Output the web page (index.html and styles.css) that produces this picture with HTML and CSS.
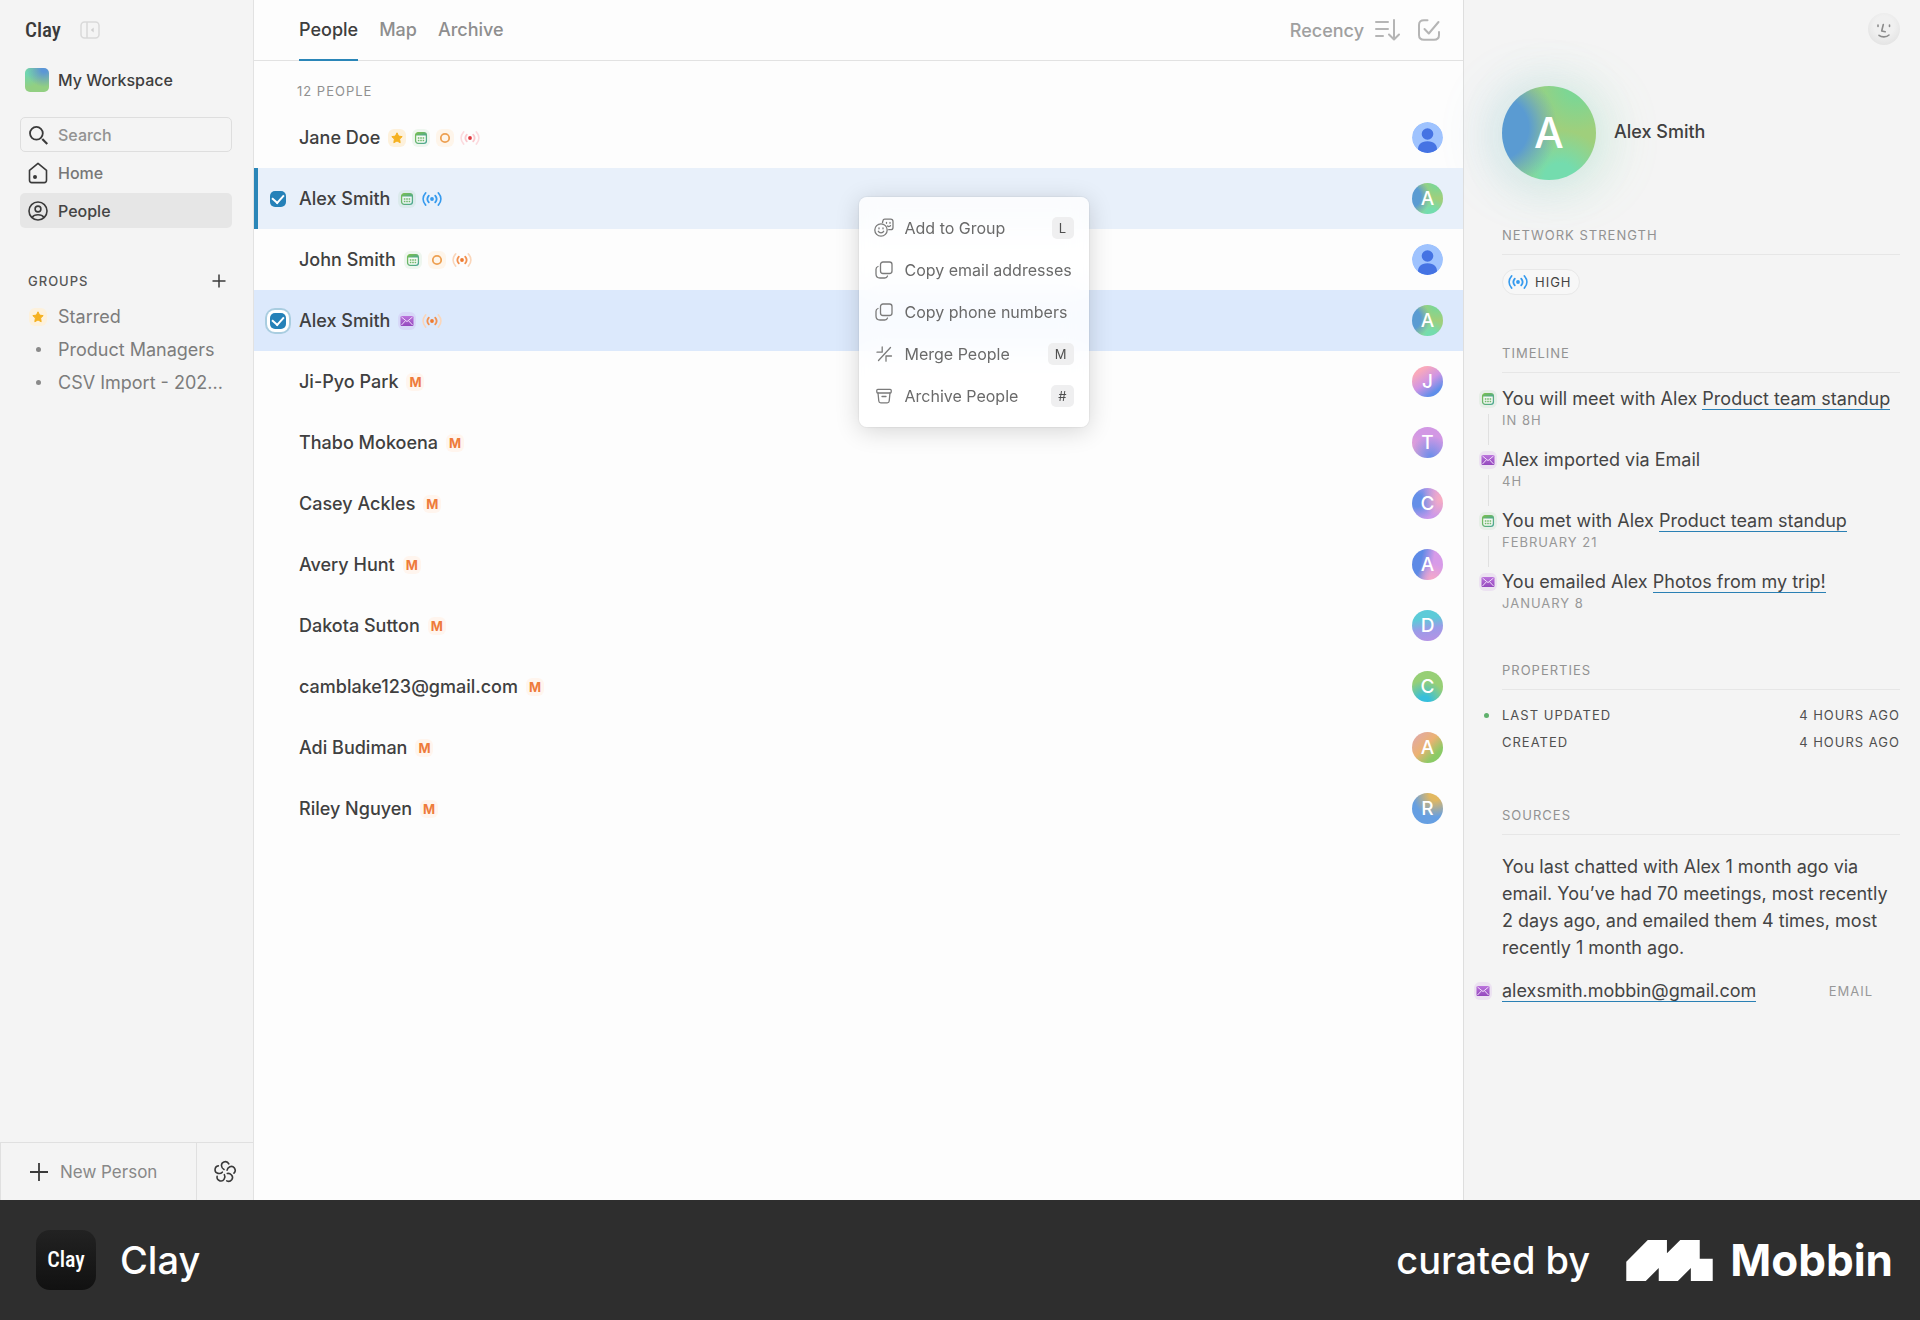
FILE: index.html
```html
<!DOCTYPE html>
<html lang="en">
<head>
  <meta charset="utf-8">
  <title>Clay</title>
  <link rel="stylesheet" href="styles.css">
</head>
<body>
  <!-- icon sprite -->
  <svg class="sprite" aria-hidden="true">
    <defs>
      <linearGradient id="greenFade" x1="0" y1="0" x2="1" y2="1">
        <stop offset="0" stop-color="#7cc04e"/>
        <stop offset="1" stop-color="#4aa695"/>
      </linearGradient>
      <linearGradient id="purpleFade" x1="0" y1="0" x2="0" y2="1">
        <stop offset="0" stop-color="#bb74dc"/>
        <stop offset="1" stop-color="#9448bd"/>
      </linearGradient>
    </defs>
    <symbol id="star" viewBox="0 0 18 18">
      <path d="M9 3.8l1.6 3.3 3.6.5-2.6 2.5.6 3.6L9 12l-3.2 1.7.6-3.6-2.6-2.5 3.6-.5z" fill="#f5b120" stroke="#f5b120" stroke-linejoin="round"/>
    </symbol>
    <symbol id="calendar" viewBox="0 0 18 18">
      <rect x="3.6" y="3.6" width="10.8" height="10.8" rx="2.6" fill="#fff" fill-opacity=".5" stroke="url(#greenFade)" stroke-width="1.3"/>
      <path d="M3.6 6.6c0-2.200 1-3 2.600-3h5.600c1.600 0 2.600.8 2.600 3z" fill="url(#greenFade)"/>
      <path d="M5.800 9h1.600M8.200 9h1.600M10.600 9h1.600M5.800 11.500h1.600M8.200 11.500h1.600M10.600 11.500h1.600" stroke="#6fb86a" stroke-width="1.300"/>
    </symbol>
    <symbol id="ring" viewBox="0 0 18 18">
      <circle cx="9" cy="9" r="4.200" fill="none" stroke="#eda052" stroke-width="1.800"/>
    </symbol>
    <symbol id="mail" viewBox="0 0 18 18">
      <rect x="2.500" y="4" width="13" height="10" rx="1.200" fill="url(#purpleFade)"/>
      <path d="M3.500 5l5.500 4.600L14.500 5M3.500 13l4-4.300M14.500 13l-4-4.300" fill="none" stroke="#f0dcfa" stroke-width="1"/>
    </symbol>
    <symbol id="signal" viewBox="0 0 20 18">
      <circle class="dot" cx="10" cy="9" r="1.900"/>
      <path class="inner" d="M6.800 5.600c-1.700 2-1.700 4.800 0 6.800M13.200 5.600c1.700 2 1.700 4.800 0 6.800"/>
      <path class="outer" d="M3.600 3c-3.200 3.600-3.200 8.400 0 12M16.400 3c3.200 3.600 3.200 8.400 0 12"/>
    </symbol>
    <symbol id="person" viewBox="0 0 31 31">
      <circle cx="15.500" cy="15.500" r="15.500" fill="#9fc3fe"/>
      <circle cx="15.500" cy="12" r="5.800" fill="#4573e3"/>
      <path d="M6 27.500c0-4.500 2.500-8.200 9.500-8.200s9.500 3.700 9.500 8.200c-2.700 2.200-6 3.500-9.500 3.500s-6.800-1.300-9.500-3.500z" fill="#4573e3"/>
    </symbol>
    <symbol id="copy" viewBox="0 0 20 20">
      <rect x="6.500" y="2" width="11.500" height="11.500" rx="2.500"/>
      <path d="M4 6.500c-1.400.4-2 1.300-2 2.800V14c0 2.700 1.300 4 4 4h4.700c1.500 0 2.400-.6 2.800-2"/>
    </symbol>
  </svg>

  <div class="app">
    <aside class="sidebar">
      <div class="brand">
        <span class="wordmark">Clay</span>
        <button class="icon-button" aria-label="Collapse sidebar">
          <svg width="20" height="18" viewBox="0 0 20 18" fill="none" stroke="#d9d9d9" stroke-width="1.500">
            <rect x="1" y="1" width="18" height="16" rx="3.500"/>
            <path d="M7 1v16"/>
            <path d="M13.700 6.500v5L10.800 9z" fill="#d0d0d0" stroke="none"/>
          </svg>
        </button>
      </div>
      <a class="workspace" href="#"><span class="swatch"></span>My Workspace</a>

      <nav class="nav">
        <label class="nav-item search">
          <svg width="20" height="20" viewBox="0 0 20 20" fill="none" stroke="#3a3a3a" stroke-width="1.800"><circle cx="8.400" cy="8.300" r="6.400"/><path d="M14.300 14l5 5" stroke-width="2.200"/></svg>
          <input type="text" placeholder="Search" aria-label="Search">
        </label>
        <a class="nav-item" href="#">
          <svg width="20" height="22" viewBox="0 0 20 22" fill="none" stroke="#3a3a3a" stroke-width="1.600" stroke-linejoin="round"><path d="M1.500 8.300L10 1.300l8.500 7v10c0 1.600-.7 2.300-2.300 2.300H3.800c-1.600 0-2.300-.7-2.300-2.300z"/><circle cx="7" cy="15" r="2" fill="#3a3a3a" stroke="none"/></svg>
          Home
        </a>
        <a class="nav-item active" href="#">
          <svg width="20" height="20" viewBox="0 0 20 20" fill="none" stroke="#3a3a3a" stroke-width="1.600"><circle cx="10" cy="10" r="9"/><circle cx="10" cy="8" r="2.900"/><path d="M4 16.500c1.200-1.900 3.300-2.800 6-2.800s4.800.9 6 2.800"/></svg>
          People
        </a>
      </nav>

      <div class="groups-head">
        <h2>GROUPS</h2>
        <button class="icon-button" aria-label="Add group">
          <svg width="14" height="14" viewBox="0 0 14 14" stroke="#3a3a3a" stroke-width="1.500"><path d="M7 .5v13M.5 7h13"/></svg>
        </button>
      </div>
      <ul class="groups">
        <li><span class="group-icon"><svg class="tag tag-star" width="18" height="18"><use href="#star"/></svg></span><a href="#">Starred</a></li>
        <li><span class="group-icon"><span class="bullet"></span></span><a href="#">Product Managers</a></li>
        <li><span class="group-icon"><span class="bullet"></span></span><a href="#">CSV Import - 202...</a></li>
      </ul>

      <div class="sidebar-foot">
        <button class="new-person">
          <svg width="18" height="18" viewBox="0 0 18 18" stroke="#3a3a3a" stroke-width="1.800"><path d="M9 0v18M0 9h18"/></svg>
          New Person
        </button>
        <button class="nexus" aria-label="Nexus">
          <svg width="24" height="24" viewBox="0 0 24 24" fill="none" stroke="#3a3a3a" stroke-width="1.600" stroke-linecap="round">
            <path id="petal" d="M11 9.500C8.200 8.300 7.200 3.200 10.800 1.900c2.200-.7 4.200.2 5 1.900"/>
            <use href="#petal" transform="rotate(72 12 12)"/>
            <use href="#petal" transform="rotate(144 12 12)"/>
            <use href="#petal" transform="rotate(216 12 12)"/>
            <use href="#petal" transform="rotate(288 12 12)"/>
          </svg>
        </button>
      </div>
    </aside>

    <main class="main">
      <header class="topbar">
        <nav class="tabs">
          <a class="tab active" href="#">People</a>
          <a class="tab" href="#">Map</a>
          <a class="tab" href="#">Archive</a>
        </nav>
        <button class="sort">
          Recency
          <svg width="25" height="22" viewBox="0 0 25 22" fill="none" stroke="#b5b5b5" stroke-width="2" stroke-linecap="round" stroke-linejoin="round"><path d="M1 3h12M1 10h12M1 17h7M19 1v19M14 15.500l5 5 5-5"/></svg>
        </button>
        <button class="icon-button" aria-label="Select all">
          <svg width="22" height="22" viewBox="0 0 22 22" fill="none" stroke="#b5b5b5" stroke-width="2" stroke-linecap="round" stroke-linejoin="round"><path d="M9.500 1.200H6C2.700 1.200 1 2.800 1 6v10c0 3.200 1.700 4.800 5 4.800h10c3.300 0 5-1.600 5-4.800v-3M6.500 10l4.300 4.500L20.500 3"/></svg>
        </button>
      </header>

      <p class="count">12 PEOPLE</p>

      <ul class="people">
        <li class="person">
          <span class="check"></span>
          <span class="name">Jane Doe</span>
          <svg class="tag tag-star" width="18" height="18"><use href="#star"/></svg>
          <svg class="tag tag-green" width="18" height="18"><use href="#calendar"/></svg>
          <svg class="tag tag-orange" width="18" height="18"><use href="#ring"/></svg>
          <svg class="signal weak" width="20" height="18"><use href="#signal"/></svg>
          <svg class="avatar" width="31" height="31"><use href="#person"/></svg>
        </li>
        <li class="person selected">
          <span class="check"><input type="checkbox" id="alex-1" checked></span>
          <label class="name" for="alex-1">Alex Smith</label>
          <svg class="tag tag-green" width="18" height="18"><use href="#calendar"/></svg>
          <svg class="signal strong" width="20" height="18"><use href="#signal"/></svg>
          <span class="avatar g-alex">A</span>
        </li>
        <li class="person">
          <span class="check"></span>
          <span class="name">John Smith</span>
          <svg class="tag tag-green" width="18" height="18"><use href="#calendar"/></svg>
          <svg class="tag tag-orange" width="18" height="18"><use href="#ring"/></svg>
          <svg class="signal medium" width="20" height="18"><use href="#signal"/></svg>
          <svg class="avatar" width="31" height="31"><use href="#person"/></svg>
        </li>
        <li class="person focused">
          <span class="check"><input type="checkbox" id="alex-2" checked></span>
          <label class="name" for="alex-2">Alex Smith</label>
          <svg class="tag tag-purple" width="18" height="18"><use href="#mail"/></svg>
          <svg class="signal medium" width="20" height="18"><use href="#signal"/></svg>
          <span class="avatar g-alex">A</span>
        </li>
        <li class="person">
          <span class="check"></span>
          <span class="name">Ji-Pyo Park</span>
          <span class="tag tag-m">M</span>
          <span class="avatar g-ji">J</span>
        </li>
        <li class="person">
          <span class="check"></span>
          <span class="name">Thabo Mokoena</span>
          <span class="tag tag-m">M</span>
          <span class="avatar g-thabo">T</span>
        </li>
        <li class="person">
          <span class="check"></span>
          <span class="name">Casey Ackles</span>
          <span class="tag tag-m">M</span>
          <span class="avatar g-casey">C</span>
        </li>
        <li class="person">
          <span class="check"></span>
          <span class="name">Avery Hunt</span>
          <span class="tag tag-m">M</span>
          <span class="avatar g-avery">A</span>
        </li>
        <li class="person">
          <span class="check"></span>
          <span class="name">Dakota Sutton</span>
          <span class="tag tag-m">M</span>
          <span class="avatar g-dakota">D</span>
        </li>
        <li class="person">
          <span class="check"></span>
          <span class="name">camblake123@gmail.com</span>
          <span class="tag tag-m">M</span>
          <span class="avatar g-cam">C</span>
        </li>
        <li class="person">
          <span class="check"></span>
          <span class="name">Adi Budiman</span>
          <span class="tag tag-m">M</span>
          <span class="avatar g-adi">A</span>
        </li>
        <li class="person">
          <span class="check"></span>
          <span class="name">Riley Nguyen</span>
          <span class="tag tag-m">M</span>
          <span class="avatar g-riley">R</span>
        </li>
      </ul>

      <!-- context menu -->
      <div class="menu">
        <button class="menu-item">
          <svg width="20" height="20" viewBox="0 0 20 20"><circle cx="7" cy="12" r="6.200"/><path d="M8.500 4.500l.5-2c.2-1 .7-1.400 1.700-1.400h6c1.600 0 2.300.7 2.300 2.300v6c0 1.600-.7 2.300-2.300 2.300h-2M4.300 13.300c.9 2 4.500 2 5.400 0M5 9.800v1M9 9.800v1M12.500 4.300v1M16 4.300v1M13.500 8c1 .8 2.300.6 3-.4"/></svg>
          Add to Group <kbd>L</kbd>
        </button>
        <button class="menu-item">
          <svg width="20" height="20"><use href="#copy"/></svg>
          Copy email addresses
        </button>
        <button class="menu-item">
          <svg width="20" height="20"><use href="#copy"/></svg>
          Copy phone numbers
        </button>
        <button class="menu-item">
          <svg width="20" height="20" viewBox="0 0 20 20"><path d="M4.500 16.500l12-13M3 8.200h5.200V3M17.500 12H12v5.200"/></svg>
          Merge People <kbd>M</kbd>
        </button>
        <button class="menu-item">
          <svg width="20" height="20" viewBox="0 0 20 20"><rect x="2.800" y="3.300" width="14.400" height="3.700" rx="1"/><path d="M4 7l.8 8c.1 1.200.8 1.800 2 1.800h6.400c1.200 0 1.900-.6 2-1.800L16 7M8 10.500h4"/></svg>
          Archive People <kbd>#</kbd>
        </button>
      </div>
    </main>

    <aside class="details">
      <div class="details-top">
        <button class="moon" aria-label="Account">
          <svg width="32" height="32" viewBox="0 0 32 32" fill="none" stroke="#8c8c8c" stroke-width="1.600" stroke-linecap="round" stroke-linejoin="round"><path d="M10 12v1.500M21.500 12v1.500M15.300 11.500l-1.600 6.500 3.500.8M11 22.300c2.500 2.200 7.500 2.200 10-.3"/></svg>
        </button>
      </div>
      <div class="profile">
        <span class="portrait g-alex">A</span>
        <h1>Alex Smith</h1>
      </div>

      <section class="section">
        <h2>NETWORK STRENGTH</h2>
        <span class="pill"><svg class="signal strong" width="20" height="18"><use href="#signal"/></svg>HIGH</span>
      </section>

      <section class="section">
        <h2>TIMELINE</h2>
        <ul class="timeline">
          <li>
            <div class="marker"><svg class="tag tag-green" width="18" height="18"><use href="#calendar"/></svg></div>
            <div><p>You will meet with Alex <a href="#">Product team standup</a></p><small>IN 8H</small></div>
          </li>
          <li>
            <div class="marker"><svg class="tag tag-purple" width="18" height="18"><use href="#mail"/></svg></div>
            <div><p>Alex imported via Email</p><small>4H</small></div>
          </li>
          <li>
            <div class="marker"><svg class="tag tag-green" width="18" height="18"><use href="#calendar"/></svg></div>
            <div><p>You met with Alex <a href="#">Product team standup</a></p><small>FEBRUARY 21</small></div>
          </li>
          <li>
            <div class="marker"><svg class="tag tag-purple" width="18" height="18"><use href="#mail"/></svg></div>
            <div><p>You emailed Alex <a href="#">Photos from my trip!</a></p><small>JANUARY 8</small></div>
          </li>
        </ul>
      </section>

      <section class="section">
        <h2>PROPERTIES</h2>
        <dl class="properties">
          <div class="updated"><dt>LAST UPDATED</dt><dd>4 HOURS AGO</dd></div>
          <div><dt>CREATED</dt><dd>4 HOURS AGO</dd></div>
        </dl>
      </section>

      <section class="section">
        <h2>SOURCES</h2>
        <p class="summary">You last chatted with Alex 1 month ago via email. You’ve had 70 meetings, most recently 2 days ago, and emailed them 4 times, most recently 1 month ago.</p>
        <div class="source">
          <svg class="tag tag-purple" width="18" height="18"><use href="#mail"/></svg>
          <a href="#">alexsmith.mobbin@gmail.com</a>
          <small>EMAIL</small>
        </div>
      </section>
    </aside>
  </div>

  <footer class="banner">
    <span class="app-icon">Clay</span>
    <span class="app-name">Clay</span>
    <span class="curated">curated by</span>
    <svg class="mobbin-mark" width="87" height="41" viewBox="0 0 253 120"><path d="M0 64L63 0h56v39L158 0h57v55h38v65h-64V82l-38 38H95V82l-38 38H0z" fill="#fff"/></svg>
    <span class="mobbin">Mobbin</span>
  </footer>
</body>
</html>
```
FILE: styles.css
```css
* {
  box-sizing: border-box;
}

body {
  margin: 0;
  min-height: 100vh;
  display: flex;
  flex-direction: column;
  font-family: Inter, "Liberation Sans", sans-serif;
  font-size: 18px;
  color: #444;
  background: #fdfdfd;
}

h1, h2, p, ul, dl, dd {
  margin: 0;
  padding: 0;
}

ul {
  list-style: none;
}

a {
  color: inherit;
  text-decoration: none;
}

button {
  font: inherit;
  color: inherit;
  background: none;
  border: 0;
  padding: 0;
}

svg {
  display: block;
  flex: none;
}

.sprite {
  position: absolute;
  width: 0;
  height: 0;
}

.app {
  flex: 1;
  display: grid;
  grid-template-columns: 254px 1fr 457px;
}

/* sidebar */
.sidebar {
  display: flex;
  flex-direction: column;
  background: #f4f4f4;
  border-right: 1px solid #e2e2e2;
}

.brand {
  display: flex;
  align-items: center;
  gap: 15px;
  height: 60px;
  padding: 0 25px;
}

.wordmark {
  width: 40px;
  font-family: "Roboto Condensed", "Open Sans Condensed", Roboto, sans-serif;
  font-size: 21px;
  font-weight: 500;
  color: #3a3a3a;
}

.workspace {
  display: flex;
  align-items: center;
  gap: 9px;
  height: 40px;
  padding: 0 25px;
  font-size: 16px;
  font-weight: 500;
  color: #3e3e3e;
}

.swatch {
  width: 24px;
  height: 24px;
  border-radius: 5px;
  background:
    radial-gradient(circle at 80% 5%, #5b96d6 10%, transparent 60%),
    radial-gradient(circle at 10% 20%, #6dd6b4, transparent 50%),
    #92cf82;
}

.nav {
  display: flex;
  flex-direction: column;
  gap: 3px;
  padding: 17px 21px 0 20px;
}

.nav-item {
  display: flex;
  align-items: center;
  gap: 10px;
  height: 35px;
  padding: 0 8px;
  border-radius: 5px;
  font-size: 16px;
  font-weight: 500;
  color: #777;
}

.nav-item.active {
  background: #e6e6e6;
  color: #444;
}

.search {
  padding: 0 7px;
  border: 1px solid #dedede;
}

.search input {
  min-width: 0;
  flex: 1;
  padding: 0;
  border: 0;
  outline: 0;
  background: none;
  font: inherit;
}

.search input::placeholder {
  color: #929292;
}

.groups-head {
  display: flex;
  align-items: center;
  justify-content: space-between;
  padding: 41px 27px 0 28px;
}

.groups-head h2 {
  font-size: 13px;
  font-weight: 500;
  line-height: 24px;
  letter-spacing: 1px;
  color: #555;
}

.groups {
  padding: 7px 20px 0 28px;
  color: #7c7c7c;
}

.groups li {
  display: flex;
  align-items: center;
  gap: 10px;
  height: 33px;
}

.group-icon {
  display: flex;
  justify-content: center;
  width: 20px;
}

.bullet {
  width: 5px;
  height: 5px;
  border-radius: 50%;
  background: #8a8a8a;
}

.sidebar-foot {
  display: flex;
  height: 58px;
  margin-top: auto;
  border: 1px solid #e0e0e0;
  border-width: 1px 0 0 1px;
}

.new-person {
  flex: 1;
  display: flex;
  align-items: center;
  gap: 12px;
  padding-left: 29px;
  font-size: 17px;
  color: #888;
}

.nexus {
  display: flex;
  align-items: center;
  justify-content: center;
  width: 57px;
  border-left: 1px solid #e0e0e0;
}

/* people list */
.main {
  position: relative;
}

.topbar {
  display: flex;
  align-items: center;
  height: 61px;
  padding: 0 23px 0 45px;
  border-bottom: 1px solid #e2e2e2;
}

.tabs {
  flex: 1;
  display: flex;
  gap: 21px;
}

.tab {
  height: 61px;
  line-height: 59px;
  font-weight: 500;
  color: #8e8e8e;
}

.tab.active {
  color: #3e3e3e;
  border-bottom: 2px solid #2a86b8;
}

.sort {
  display: flex;
  align-items: center;
  gap: 11px;
  margin-right: 18px;
  font-weight: 500;
  color: #a0a0a0;
}

.count {
  padding: 18px 0 4px 43px;
  font-size: 13px;
  line-height: 24px;
  letter-spacing: 1px;
  color: #909090;
}

.person {
  display: flex;
  align-items: center;
  gap: 6px;
  height: 61px;
  padding-right: 20px;
}

.person.selected {
  background: #e8f0fa;
  box-shadow: inset 4px 0 #2a86b8;
}

.person.focused {
  background: #dce9fc;
}

.check {
  width: 39px;
  padding-left: 16px;
}

.check input {
  display: grid;
  place-content: center;
  appearance: none;
  width: 16px;
  height: 16px;
  margin: 0;
  border-radius: 5px;
  background: #2581b8;
}

.check input::before {
  content: "";
  width: 6px;
  height: 9px;
  margin-bottom: 2px;
  border: solid #fff;
  border-width: 0 2px 2px 0;
  transform: rotate(42deg);
}

.focused input {
  box-shadow: 0 0 0 3px #fff, 0 0 0 5px #a9cde0;
}

.name {
  padding-right: 2px;
  font-weight: 500;
  color: #404040;
}

.tag {
  width: 18px;
  height: 18px;
  border-radius: 6px;
}

.tag-star {
  background: #fdf1dc;
}

.tag-green {
  background: rgba(110, 190, 120, 0.1);
}

.tag-orange {
  background: #fef5ea;
}

.tag-purple {
  background: rgba(178, 98, 220, 0.12);
}

.tag-m {
  background: #fff5ee;
  color: #ee7b3b;
  font-size: 13px;
  font-weight: 700;
  line-height: 18px;
  text-align: center;
}

.signal {
  fill: none;
  stroke-width: 1.8px;
  stroke-linecap: round;
}

.strong {
  color: #359aee;
  stroke: #359aee;
  --outer: #359aee;
}

.medium {
  color: #ee7a30;
  stroke: #f29150;
  --outer: #fad6ba;
}

.weak {
  color: #e03a40;
  stroke: #fac9ce;
  --outer: #fcdade;
}

.dot {
  fill: currentColor;
  stroke: none;
}

.outer {
  stroke: var(--outer);
}

.avatar {
  width: 31px;
  height: 31px;
  margin-left: auto;
  border-radius: 50%;
  color: #fff;
  font-size: 19px;
  font-weight: 500;
  line-height: 31px;
  text-align: center;
}

.g-alex {
  background:
    radial-gradient(circle at -5% 45%, #5a9bd2 28%, transparent 54%),
    radial-gradient(circle at 62% 100%, #74dcae 15%, transparent 45%),
    radial-gradient(circle at 80% 0, #7dd694 10%, transparent 38%),
    #9fcf7c;
}

.g-ji {
  background: linear-gradient(145deg, #f9a9bb 20%, #cf95e4 50%, #5f8eea 80%);
}

.g-thabo {
  background: radial-gradient(circle at 60% 95%, #6b8eea, transparent 60%), linear-gradient(45deg, #e7a4cf, #d298e4 50%);
}

.g-casey {
  background:
    radial-gradient(circle at 95% 35%, #f9adc0, transparent 55%),
    radial-gradient(circle at 15% 40%, #658fe8 20%, transparent 65%),
    #cb98ea;
}

.g-avery {
  background: radial-gradient(circle at 65% 100%, #f6a9c6, transparent 45%), linear-gradient(100deg, #5d8ae6 30%, #d79be8 65%);
}

.g-dakota {
  background: linear-gradient(170deg, #5ccbd8 30%, #9b9be8 60%, #b992e4);
}

.g-cam {
  background: radial-gradient(circle at 40% 100%, #36bfdc 15%, transparent 60%), #97cf76;
}

.g-adi {
  background: linear-gradient(135deg, #dda8b4, #ecb272 45%, #8bca66 75%);
}

.g-riley {
  background: radial-gradient(circle at 75% 5%, #e2b860 15%, transparent 60%), #669fe2;
}

/* context menu */
.menu {
  position: absolute;
  top: 197px;
  left: 50%;
  width: 230px;
  padding: 10px 0;
  border-radius: 8px;
  background: rgba(255, 255, 255, 0.8);
  backdrop-filter: blur(14px);
  box-shadow: 0 4px 24px rgba(0, 0, 0, 0.16), 0 0 2px rgba(0, 0, 0, 0.15);
}

.menu-item {
  display: flex;
  align-items: center;
  gap: 11px;
  width: 100%;
  height: 42px;
  padding: 0 15px;
  font-size: 16px;
  color: #6a6a6a;
  white-space: nowrap;
}

.menu-item svg {
  fill: none;
  stroke: #7b7b7b;
  stroke-width: 1.3px;
  stroke-linecap: round;
  stroke-linejoin: round;
}

.menu-item kbd {
  min-width: 22px;
  margin-left: auto;
  padding: 0 7px;
  border-radius: 5px;
  background: #efeff0;
  font-family: inherit;
  font-size: 13px;
  line-height: 22px;
  text-align: center;
  color: #505050;
}

/* person details */
.details {
  padding: 13px 20px 0 38px;
  background: #f4f4f4;
  border-left: 1px solid #dedede;
}

.details-top {
  display: flex;
  justify-content: flex-end;
}

.moon {
  border-radius: 50%;
  background: radial-gradient(circle at 50% 40%, #f0f0f0 40%, #dcdcdc);
}

.profile {
  display: flex;
  align-items: center;
  gap: 18px;
  padding: 41px 0 45px;
}

.profile h1 {
  padding-bottom: 4px;
  font-size: 18px;
  font-weight: 500;
  color: #404040;
}

.portrait {
  width: 94px;
  height: 94px;
  border-radius: 50%;
  box-shadow: 12px 4px 54px rgba(125, 224, 148, 0.22), -10px 2px 54px rgba(87, 175, 210, 0.22);
  color: #fff;
  font-size: 42px;
  font-weight: 500;
  line-height: 94px;
  text-align: center;
}

.section {
  margin-bottom: 48px;
}

.section h2 {
  margin-bottom: 14px;
  padding-bottom: 9px;
  border-bottom: 1px solid #e6e6e6;
  font-size: 13px;
  font-weight: 400;
  line-height: 20px;
  letter-spacing: 1px;
  color: #929292;
}

.details small {
  font-size: 13px;
  line-height: 18px;
  letter-spacing: 1px;
  color: #989898;
}

.details p a,
.source a {
  border-bottom: 1px solid #2a80b4;
}

.pill {
  display: inline-flex;
  align-items: center;
  gap: 7px;
  height: 26px;
  padding: 0 7px 0 5px;
  border: 1px solid #e8e8e8;
  border-radius: 13px;
  background: #f7f7f7;
  font-size: 13px;
  letter-spacing: 1px;
  vertical-align: top;
}

.timeline {
  margin-left: -30px;
}

.timeline li {
  display: grid;
  grid-template-columns: 30px 1fr;
  height: 61px;
}

.timeline li:last-child {
  height: 42px;
}

.timeline p {
  line-height: 24px;
  white-space: nowrap;
}

.timeline small {
  display: block;
}

.marker {
  display: flex;
  flex-direction: column;
  align-items: center;
  padding: 3px 0 0 2px;
}

.marker::after {
  content: "";
  flex: 1;
  width: 1px;
  margin: 6px 0 3px;
  background: #e0e0e0;
}

.timeline li:last-child .marker::after {
  display: none;
}

.properties {
  display: flex;
  flex-direction: column;
  gap: 4px;
  padding-bottom: 3px;
  font-size: 13px;
  line-height: 23px;
  letter-spacing: 1px;
  color: #505050;
}

.properties div {
  display: flex;
  justify-content: space-between;
}

.updated::before {
  content: "";
  align-self: center;
  width: 5px;
  height: 5px;
  margin: 0 13px 0 -18px;
  border-radius: 50%;
  background: #5fb06c;
}

.updated dt {
  flex: 1;
}

.summary {
  padding-top: 4px;
  line-height: 27px;
}

.source {
  display: flex;
  align-items: center;
  gap: 10px;
  margin: 19px 27px 0 -28px;
}

.source small {
  margin-left: auto;
}

/* bottom banner */
.banner {
  display: flex;
  align-items: center;
  height: 120px;
  padding: 0 27px 0 36px;
  background: #2e2e2e;
  color: #fff;
}

.app-icon {
  width: 60px;
  margin-right: 24px;
  border-radius: 14px;
  background: linear-gradient(#222, #111);
  font-family: "Roboto Condensed", "Open Sans Condensed", Roboto, sans-serif;
  font-size: 22px;
  font-weight: 500;
  line-height: 60px;
  text-align: center;
}

.app-name,
.curated {
  font-size: 38px;
  font-weight: 500;
}

.curated {
  margin-left: auto;
}

.mobbin-mark {
  margin: 0 17px 0 36px;
}

.mobbin {
  font-size: 44px;
  font-weight: 700;
}
```
